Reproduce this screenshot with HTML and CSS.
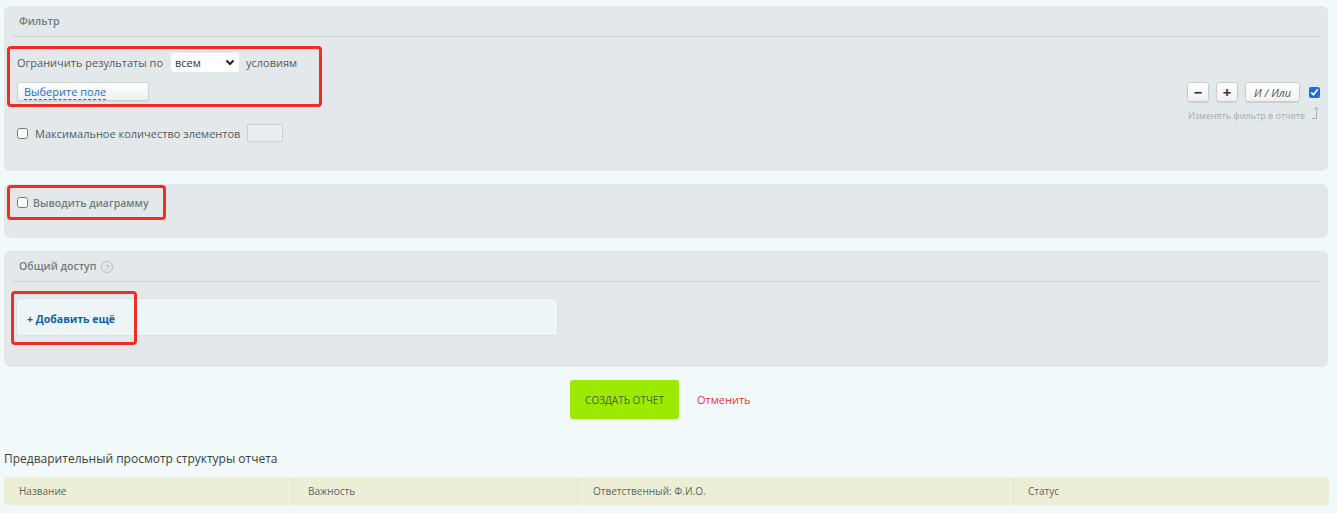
FILE: index.html
```html
<!DOCTYPE html>
<html lang="ru">
<head>
    <meta charset="UTF-8">
    <title>Отчет</title>
    <link rel="stylesheet" href="styles.css">
</head>
<body>
    <div class="page">
        <div class="panel filter">
            <div class="panel-title">Фильтр</div>
            <div class="filter-body">
                <div class="filter-left">
                    <div class="mark mark-filter">
                        <div class="cond-row">
                            <span>Ограничить результаты по</span>
                            <div class="select">
                                <span>всем</span>
                                <svg width="10" height="7" viewBox="0 0 10 7"><path d="M1.5 1.5 L5 5 L8.5 1.5" fill="none" stroke="#222" stroke-width="2"/></svg>
                            </div>
                            <span>условиям</span>
                        </div>
                        <button class="field-btn"><span>Выберите поле</span></button>
                    </div>
                    <label class="check-row">
                        <input type="checkbox">
                        <span>Максимальное количество элементов</span>
                        <input type="text" class="small-input">
                    </label>
                </div>
                <div class="filter-right">
                    <div class="ctl-row">
                        <button class="ctl-btn sq">&minus;</button>
                        <button class="ctl-btn sq">+</button>
                        <button class="ctl-btn andor">И / Или</button>
                        <input type="checkbox" class="change-check" checked>
                    </div>
                    <div class="ctl-hint">
                        <span>Изменять фильтр в отчете</span>
                        <svg width="9" height="14" viewBox="0 0 9 14"><path d="M1 12.5 H5.5 V1.5 M3.5 3.5 L5.5 1.2 L7.5 3.5" fill="none" stroke="#a9b0b2" stroke-width="1"/></svg>
                    </div>
                </div>
            </div>
        </div>

        <div class="panel chart">
            <label class="mark mark-chart">
                <input type="checkbox">
                <span>Выводить диаграмму</span>
            </label>
        </div>

        <div class="panel share">
            <div class="panel-title">Общий доступ <span class="help">?</span></div>
            <div class="share-box">
                <a href="#" class="add-link">+ Добавить ещё</a>
                <div class="mark mark-share"></div>
            </div>
        </div>

        <div class="actions">
            <button class="create-btn">СОЗДАТЬ ОТЧЕТ</button>
            <a href="#" class="cancel-link">Отменить</a>
        </div>

        <div class="preview-title">Предварительный просмотр структуры отчета</div>
        <div class="preview-table">
            <div class="col c1">Название</div>
            <div class="col c2">Важность</div>
            <div class="col c3">Ответственный: Ф.И.О.</div>
            <div class="col c4">Статус</div>
        </div>
    </div>
</body>
</html>
```

FILE: styles.css
```css
body {
    margin: 0;
    padding: 0;
    background-color: #f2f9fb;
    font-family: 'Open Sans', 'Noto Sans', sans-serif;
    font-size: 11px;
    color: #535c5f;
}

.page {
    padding: 6px 9px 0 4px;
}

.panel {
    background-color: #e3e9ea;
    border-radius: 6px;
    padding: 0 8px;
    margin-bottom: 13px;
}

.panel-title {
    padding: 8px 7px 7px;
    line-height: 15px;
    font-size: 10.5px;
    font-weight: 600;
    color: #737b7e;
    border-bottom: 1px solid #cdd4d6;
    display: flex;
    align-items: center;
    gap: 5px;
}

.mark {
    border: 3px solid #ef2e21;
    border-radius: 4px;
}

/* filter */
.filter {
    height: 165px;
    box-sizing: border-box;
}

.filter-body {
    display: flex;
    justify-content: space-between;
    padding-top: 9px;
}

.mark-filter {
    margin-left: -5px;
    width: 302px;
    padding: 4px 0 3px 7px;
}

.cond-row {
    display: flex;
    align-items: center;
    height: 19px;
}

.select {
    width: 60px;
    height: 19px;
    margin: 0 7px 0 8px;
    padding: 0 4px;
    background-color: #fff;
    border-radius: 3px;
    display: flex;
    align-items: center;
    justify-content: space-between;
    color: #333;
    font-size: 11px;
}

.field-btn {
    margin-top: 10px;
    width: 132px;
    height: 19px;
    padding: 0 6px;
    text-align: left;
    background: linear-gradient(#ffffff, #edf1f2);
    border: 1px solid #cbd2d4;
    border-radius: 2px;
    box-shadow: 0 1px 1px rgba(0, 0, 0, 0.08);
    font-family: 'Open Sans', sans-serif;
    font-size: 11px;
    display: block;
}

.field-btn span {
    color: #1f6fc4;
    border-bottom: 1px dashed #1f6fc4;
}

.check-row {
    display: flex;
    align-items: center;
    margin-top: 17px;
    padding-left: 5px;
    height: 18px;
}

input[type="checkbox"] {
    width: 11px;
    height: 11px;
    margin: 0 7px 0 0;
}

.small-input {
    width: 34px;
    height: 16px;
    margin-left: 7px;
    padding: 0;
    border: 1px solid #c9d0d2;
    background-color: #e8eeef;
}

.filter-right {
    margin-top: 36px;
    display: flex;
    flex-direction: column;
    align-items: flex-end;
}

.ctl-row {
    display: flex;
    align-items: center;
    gap: 7px;
}

.ctl-btn {
    height: 20px;
    background: linear-gradient(#ffffff, #eef0f1);
    border: 1px solid #c5cdd1;
    border-radius: 3px;
    box-shadow: 0 1px 1px rgba(0, 0, 0, 0.1);
    font-family: 'Open Sans', sans-serif;
    color: #333;
    padding: 0;
}

.ctl-btn.sq {
    width: 22px;
    font-size: 15px;
    font-weight: 700;
    line-height: 16px;
}

.ctl-btn.andor {
    width: 55px;
    font-size: 11px;
    font-style: italic;
    color: #555;
}

.change-check {
    accent-color: #1a6fd6;
    margin: 0 0 0 2px !important;
}

.ctl-hint {
    display: flex;
    align-items: flex-end;
    gap: 6px;
    margin-top: 4px;
    font-size: 9px;
    color: #a4abad;
}

.ctl-hint span {
    margin-bottom: -2px;
}

/* chart */
.chart {
    height: 54px;
    box-sizing: border-box;
    padding-top: 1px;
}

.mark-chart {
    margin-left: -5px;
    width: 146px;
    height: 29px;
    padding-left: 7px;
    display: flex;
    align-items: center;
    font-size: 10.5px;
    font-weight: 600;
    color: #737b7e;
}

.mark-chart input {
    margin-right: 5px;
}

/* share */
.share {
    height: 116px;
    box-sizing: border-box;
}

.help {
    width: 10px;
    height: 10px;
    border: 1px solid #b7bec0;
    border-radius: 50%;
    font-size: 8px;
    line-height: 10px;
    text-align: center;
    color: #9aa2a4;
    font-weight: 400;
}

.share-box {
    position: relative;
    margin: 16px 0 0 4px;
    width: 530px;
    height: 36px;
    background-color: #eef5f7;
    border: 1px solid #dce3e5;
    border-radius: 3px;
    display: flex;
    align-items: center;
    padding-left: 10px;
}

.add-link {
    color: #1560a9;
    font-size: 10.5px;
    font-weight: 700;
    text-decoration: none;
    margin-top: 3px;
}

.mark-share {
    position: absolute;
    left: -6px;
    top: -8px;
    width: 120px;
    height: 48px;
}

/* actions */
.actions {
    display: flex;
    align-items: center;
    padding-left: 566px;
    height: 39px;
}

.create-btn {
    width: 109px;
    height: 39px;
    background-color: #9bea00;
    border: none;
    border-radius: 3px;
    font-family: 'Open Sans', sans-serif;
    font-size: 10px;
    color: #4f5a4a;
    padding: 0;
}

.cancel-link {
    margin-left: 18px;
    color: #e8362c;
    text-decoration: none;
    font-size: 11px;
}

/* preview */
.preview-title {
    margin-top: 32px;
    font-size: 12px;
    color: #3a3f41;
    line-height: 16px;
}

.preview-table {
    margin-top: 10px;
    height: 28px;
    background-color: #ecefd5;
    border-top-right-radius: 5px;
    display: flex;
    margin-right: -1px;
}

.col {
    display: flex;
    align-items: center;
    padding-left: 15px;
    font-size: 10px;
    color: #5e6360;
    border-right: 1px solid #e1e4c6;
    box-sizing: border-box;
}

.c1 { width: 289px; }
.c2 { width: 285px; }
.c3 { width: 436px; }
.c4 { flex: 1; padding-left: 14px; border-right: none; }
```
